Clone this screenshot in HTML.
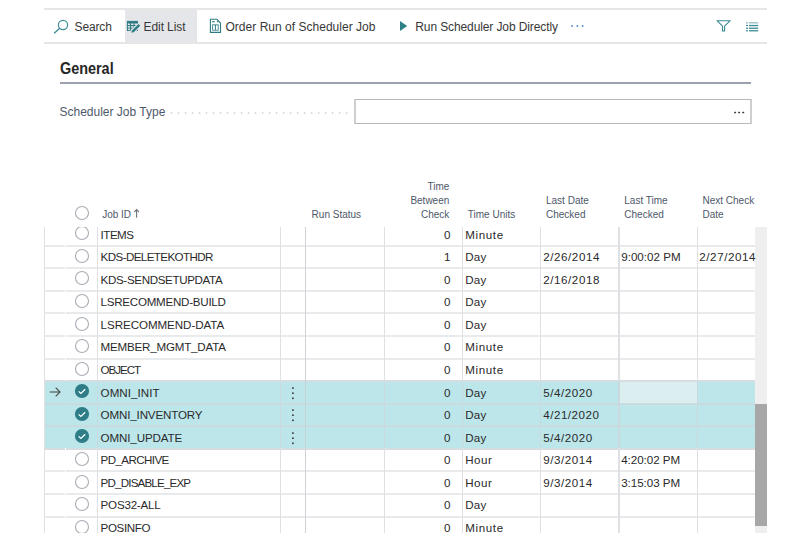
<!DOCTYPE html>
<html><head><meta charset="utf-8">
<style>
*{margin:0;padding:0;box-sizing:border-box}
html,body{width:800px;height:533px;overflow:hidden;background:#fff;font-family:"Liberation Sans",sans-serif;color:#333}
.a{position:absolute;white-space:nowrap}
.tb{font-size:12px;color:#383838;line-height:14px}
.hl{position:absolute;left:44px;width:723px;height:1px;background:#e6e6e6}
.hd{font-size:10px;color:#4e586a;line-height:13.8px}
.cell{font-size:11.6px;color:#2a2a2a;line-height:14px}
.vl{position:absolute;width:1.5px;background:#dfe0e4}
.rl{position:absolute;height:2px;background:#e9eaec}
</style></head><body>
<!-- toolbar -->
<div class="hl" style="top:8.4px;height:1.6px"></div>
<div class="hl" style="top:42.4px;height:1.6px"></div>
<div class="a" style="left:125px;top:10px;width:72px;height:32.4px;background:#e5e6e9"></div>

<svg class="a" style="left:50px;top:18px" width="20" height="18" viewBox="0 0 20 18">
  <circle cx="13" cy="7" r="4.6" fill="none" stroke="#3b8a94" stroke-width="1.2"/>
  <line x1="4.2" y1="15.2" x2="9.7" y2="10.3" stroke="#3b8a94" stroke-width="1.3"/>
</svg>
<div class="a tb" style="left:74.5px;top:20px;letter-spacing:-0.12px">Search</div>

<svg class="a" style="left:124px;top:18px" width="20" height="18" viewBox="0 0 20 18">
  <rect x="2.9" y="2.9" width="11.1" height="10.1" fill="#2f7c85"/>
  <g fill="#e5e6e9">
  <rect x="3.9" y="5.5" width="2.1" height="1.5"/><rect x="7.1" y="5.5" width="2.4" height="1.5"/><rect x="10.6" y="5.5" width="2.4" height="1.5"/>
  <rect x="3.9" y="8.1" width="2.1" height="1.5"/><rect x="7.1" y="8.1" width="2.4" height="1.5"/><rect x="10.6" y="8.1" width="2.4" height="1.5"/>
  <rect x="3.9" y="10.6" width="2.1" height="1.5"/><rect x="7.1" y="10.6" width="2.4" height="1.5"/><rect x="10.6" y="10.6" width="2.4" height="1.5"/>
  </g>
  <path d="M8 14.2 L15.4 6.8" stroke="#e5e6e9" stroke-width="4.6"/>
  <path d="M8.6 13.6 L15.4 6.8" stroke="#2f7c85" stroke-width="2.5"/>
  <path d="M7.2 14.8 L7.9 12.6 L9.5 14.1 Z" fill="#2f7c85"/>
</svg>
<div class="a tb" style="left:143.6px;top:20px;letter-spacing:-0.1px">Edit List</div>

<svg class="a" style="left:209px;top:18px" width="14" height="16" viewBox="0 0 14 16">
  <path d="M1.4 1.3 H7.9 L11.5 5 V14.4 H1.4 Z" fill="none" stroke="#2f7c85" stroke-width="1.1"/>
  <rect x="3.2" y="6.4" width="6.4" height="6.2" fill="#2f7c85"/>
  <rect x="4.0" y="7.3" width="1.9" height="4.5" fill="#fff"/><rect x="6.9" y="7.3" width="1.9" height="4.5" fill="#fff"/>
  <rect x="3.1" y="3.1" width="2.6" height="1.2" fill="#2f7c85"/>
  <rect x="7.9" y="3.1" width="1.2" height="1.2" fill="#2f7c85"/>
</svg>
<div class="a tb" style="left:225.5px;top:20px;letter-spacing:0.02px">Order Run of Scheduler Job</div>

<svg class="a" style="left:399px;top:20px" width="10" height="12" viewBox="0 0 10 12">
  <path d="M1 1 L8.2 6 L1 11 Z" fill="#2f7f89"/>
</svg>
<div class="a tb" style="left:415.3px;top:20px;letter-spacing:-0.11px">Run Scheduler Job Directly</div>
<svg class="a" style="left:570px;top:24px" width="16" height="4" viewBox="0 0 16 4">
  <g fill="#3f7fc6"><rect x="1.3" y="1.2" width="1.6" height="1.6"/><rect x="6.6" y="1.2" width="1.6" height="1.6"/><rect x="11.8" y="1.2" width="1.6" height="1.6"/></g>
</svg>

<svg class="a" style="left:715px;top:19px" width="17" height="14" viewBox="0 0 17 14">
  <path d="M2 1.7 H15.2 L9.6 7.2 V12.05 H7.5 V7.2 Z" fill="none" stroke="#3b8a94" stroke-width="1.1" stroke-linejoin="round"/>
</svg>
<svg class="a" style="left:745px;top:21px" width="15" height="11" viewBox="0 0 15 11">
  <g fill="#3b8a94">
  <rect x="1" y="1.1" width="2" height="1.4" fill="#9cc4c8"/><rect x="4" y="1.1" width="9.2" height="1.4" fill="#9cc4c8"/>
  <rect x="1" y="3.9" width="2" height="1.2"/><rect x="4" y="3.9" width="9.2" height="1.3"/>
  <rect x="1" y="6.7" width="2" height="1.2"/><rect x="4" y="6.6" width="9.2" height="1.3"/>
  <rect x="1" y="9.2" width="2" height="1.2"/><rect x="4" y="9.1" width="9.2" height="1.3"/>
  </g>
</svg>

<!-- General -->
<div class="a" style="left:60px;top:60.1px;font-size:16px;font-weight:bold;color:#262626;line-height:18px;transform:scaleX(0.9);transform-origin:0 0">General</div>
<div class="a" style="left:60px;top:82px;width:691px;height:2px;background:#9ca2ad"></div>

<div class="a" style="left:59.5px;top:105.1px;font-size:12px;color:#4f596b;line-height:14px;letter-spacing:0px">Scheduler Job Type</div>
<svg class="a" style="left:170px;top:112.2px" width="182" height="2" viewBox="0 0 182 2"><g fill="#cdd0d6"><rect x="0.8" y="0.3" width="1.5" height="1.5"/><rect x="7.8" y="0.3" width="1.5" height="1.5"/><rect x="14.8" y="0.3" width="1.5" height="1.5"/><rect x="21.8" y="0.3" width="1.5" height="1.5"/><rect x="28.8" y="0.3" width="1.5" height="1.5"/><rect x="35.8" y="0.3" width="1.5" height="1.5"/><rect x="42.8" y="0.3" width="1.5" height="1.5"/><rect x="49.8" y="0.3" width="1.5" height="1.5"/><rect x="56.8" y="0.3" width="1.5" height="1.5"/><rect x="63.8" y="0.3" width="1.5" height="1.5"/><rect x="70.8" y="0.3" width="1.5" height="1.5"/><rect x="77.8" y="0.3" width="1.5" height="1.5"/><rect x="84.8" y="0.3" width="1.5" height="1.5"/><rect x="91.9" y="0.3" width="1.5" height="1.5"/><rect x="98.9" y="0.3" width="1.5" height="1.5"/><rect x="105.9" y="0.3" width="1.5" height="1.5"/><rect x="112.9" y="0.3" width="1.5" height="1.5"/><rect x="119.9" y="0.3" width="1.5" height="1.5"/><rect x="126.9" y="0.3" width="1.5" height="1.5"/><rect x="133.9" y="0.3" width="1.5" height="1.5"/><rect x="140.9" y="0.3" width="1.5" height="1.5"/><rect x="147.9" y="0.3" width="1.5" height="1.5"/><rect x="154.9" y="0.3" width="1.5" height="1.5"/><rect x="161.9" y="0.3" width="1.5" height="1.5"/><rect x="168.9" y="0.3" width="1.5" height="1.5"/><rect x="175.9" y="0.3" width="1.5" height="1.5"/></g></svg>
<div class="a" style="left:354px;top:98.8px;width:397.5px;height:25.3px;border-style:solid;border-color:#b8b8b8 #cfcfcf;border-width:1.4px 2px"></div>
<svg class="a" style="left:730px;top:110px" width="16" height="5" viewBox="0 0 16 5"><g fill="#3c3c3c"><rect x="4.1" y="1.65" width="2" height="1.5" rx="0.5"/><rect x="8.1" y="1.65" width="2" height="1.5" rx="0.5"/><rect x="12.2" y="1.65" width="2" height="1.5" rx="0.5"/></g></svg>

<!-- GRID START -->
<svg class="a" style="left:73.7px;top:204.5px" width="16" height="16" viewBox="0 0 16 16"><circle cx="8" cy="8" r="6.5" fill="none" stroke="#a9adb4" stroke-width="1.1"/></svg>
<div class="a hd" style="left:102.2px;top:208.0px">Job ID</div>
<svg class="a" style="left:132px;top:207px" width="10" height="12" viewBox="0 0 10 12"><path d="M4.6 2.6 V10.8" stroke="#6f737a" stroke-width="1.1"/><path d="M2.2 5.2 L4.6 2.6 L7 5.2" fill="none" stroke="#6f737a" stroke-width="1.1"/></svg>
<div class="a hd" style="left:311.6px;top:208.1px">Run Status</div>
<div class="a hd" style="left:384px;width:65.3px;text-align:right;top:180.1px">Time<br>Between<br>Check</div>
<div class="a hd" style="left:467.8px;top:208.1px">Time Units</div>
<div class="a hd" style="left:546px;top:193.9px">Last Date<br>Checked</div>
<div class="a hd" style="left:624.3px;top:193.9px">Last Time<br>Checked</div>
<div class="a hd" style="left:702.5px;top:193.9px">Next Check<br>Date</div>
<div class="a" style="left:0;top:227.0px;width:767px;height:306.0px;overflow:hidden">
<div class="a" style="left:44.5px;top:153.62px;width:710.5px;height:22.57px;background:#bde6ea"></div>
<div class="a" style="left:44.5px;top:176.19px;width:710.5px;height:22.57px;background:#bde6ea"></div>
<div class="a" style="left:44.5px;top:198.76px;width:710.5px;height:22.57px;background:#bde6ea"></div>
<div class="a" style="left:619.3px;top:154.62px;width:78px;height:21.5px;background:#dbeef0"></div>
<div class="rl" style="left:44.5px;top:17.70px;width:20.5px"></div>
<div class="rl" style="left:66px;top:17.70px;width:689px"></div>
<div class="rl" style="left:44.5px;top:40.27px;width:20.5px"></div>
<div class="rl" style="left:66px;top:40.27px;width:689px"></div>
<div class="rl" style="left:44.5px;top:62.84px;width:20.5px"></div>
<div class="rl" style="left:66px;top:62.84px;width:689px"></div>
<div class="rl" style="left:44.5px;top:85.41px;width:20.5px"></div>
<div class="rl" style="left:66px;top:85.41px;width:689px"></div>
<div class="rl" style="left:44.5px;top:107.98px;width:20.5px"></div>
<div class="rl" style="left:66px;top:107.98px;width:689px"></div>
<div class="rl" style="left:44.5px;top:130.55px;width:20.5px"></div>
<div class="rl" style="left:66px;top:130.55px;width:689px"></div>
<div class="rl" style="left:44.5px;top:153.12px;width:20.5px;background:#d6dde0"></div>
<div class="rl" style="left:66px;top:153.12px;width:689px;background:#d6dde0"></div>
<div class="rl" style="left:44.5px;top:175.69px;width:20.5px;background:#cadbdf"></div>
<div class="rl" style="left:66px;top:175.69px;width:689px;background:#cadbdf"></div>
<div class="rl" style="left:44.5px;top:198.26px;width:20.5px;background:#cadbdf"></div>
<div class="rl" style="left:66px;top:198.26px;width:689px;background:#cadbdf"></div>
<div class="rl" style="left:44.5px;top:220.83px;width:20.5px;background:#d6dde0"></div>
<div class="rl" style="left:66px;top:220.83px;width:689px;background:#d6dde0"></div>
<div class="rl" style="left:44.5px;top:243.40px;width:20.5px"></div>
<div class="rl" style="left:66px;top:243.40px;width:689px"></div>
<div class="rl" style="left:44.5px;top:265.97px;width:20.5px"></div>
<div class="rl" style="left:66px;top:265.97px;width:689px"></div>
<div class="rl" style="left:44.5px;top:288.54px;width:20.5px"></div>
<div class="rl" style="left:66px;top:288.54px;width:689px"></div>
<div class="rl" style="left:44.5px;top:311.11px;width:20.5px"></div>
<div class="rl" style="left:66px;top:311.11px;width:689px"></div>
<div class="vl" style="left:43.8px;top:0;height:320px"></div>
<div class="vl" style="left:96.7px;top:0;height:320px"></div>
<div class="vl" style="left:96.7px;top:153.62px;height:67.71px;background:#c9d9dd"></div>
<div class="vl" style="left:279.8px;top:0;height:320px"></div>
<div class="vl" style="left:279.8px;top:153.62px;height:67.71px;background:#c9d9dd"></div>
<div class="a" style="left:304.8px;top:0;width:1.6px;height:320px;background:#d0d2d7"></div>
<div class="a" style="left:304.8px;top:153.62px;width:1.6px;height:67.71px;background:#c4d2d6"></div>
<div class="vl" style="left:383.9px;top:0;height:320px"></div>
<div class="vl" style="left:383.9px;top:153.62px;height:67.71px;background:#c9d9dd"></div>
<div class="vl" style="left:461.8px;top:0;height:320px"></div>
<div class="vl" style="left:461.8px;top:153.62px;height:67.71px;background:#c9d9dd"></div>
<div class="vl" style="left:539.8px;top:0;height:320px"></div>
<div class="vl" style="left:539.8px;top:153.62px;height:67.71px;background:#c9d9dd"></div>
<div class="vl" style="left:618.0px;top:0;height:320px"></div>
<div class="vl" style="left:618.0px;top:153.62px;height:67.71px;background:#c9d9dd"></div>
<div class="vl" style="left:696.5px;top:0;height:320px"></div>
<div class="vl" style="left:696.5px;top:153.62px;height:67.71px;background:#c9d9dd"></div>
<div class="a" style="left:755px;top:0;width:12px;height:320px;background:#efefef"></div>
<div class="a" style="left:755.2px;top:176.9px;width:11.8px;height:122.1px;background:#a7a7a7"></div>
<svg class="a" style="left:73.7px;top:-1.72px" width="16" height="16" viewBox="0 0 16 16"><circle cx="8" cy="8" r="6.5" fill="none" stroke="#a9adb4" stroke-width="1.1"/></svg>
<div class="a cell" style="left:100.6px;top:0.63px;letter-spacing:-0.510px">ITEMS</div>
<div class="a cell" style="left:384.7px;width:65.8px;text-align:right;top:0.63px">0</div>
<div class="a cell" style="left:465.2px;top:0.63px;letter-spacing:0.638px">Minute</div>
<svg class="a" style="left:73.7px;top:20.85px" width="16" height="16" viewBox="0 0 16 16"><circle cx="8" cy="8" r="6.5" fill="none" stroke="#a9adb4" stroke-width="1.1"/></svg>
<div class="a cell" style="left:100.6px;top:23.20px;letter-spacing:-0.598px">KDS-DELETEKOTHDR</div>
<div class="a cell" style="left:384.7px;width:65.8px;text-align:right;top:23.20px">1</div>
<div class="a cell" style="left:465.2px;top:23.20px;letter-spacing:0.190px">Day</div>
<div class="a cell" style="left:543.2px;top:23.20px;letter-spacing:0.578px">2/26/2014</div>
<div class="a cell" style="left:621.2px;top:23.20px;letter-spacing:0.022px">9:00:02 PM</div>
<div class="a cell" style="left:699.3px;top:23.20px;letter-spacing:0.578px">2/27/2014</div>
<svg class="a" style="left:73.7px;top:43.42px" width="16" height="16" viewBox="0 0 16 16"><circle cx="8" cy="8" r="6.5" fill="none" stroke="#a9adb4" stroke-width="1.1"/></svg>
<div class="a cell" style="left:100.6px;top:45.77px;letter-spacing:-0.354px">KDS-SENDSETUPDATA</div>
<div class="a cell" style="left:384.7px;width:65.8px;text-align:right;top:45.77px">0</div>
<div class="a cell" style="left:465.2px;top:45.77px;letter-spacing:0.190px">Day</div>
<div class="a cell" style="left:543.2px;top:45.77px;letter-spacing:0.578px">2/16/2018</div>
<svg class="a" style="left:73.7px;top:65.99px" width="16" height="16" viewBox="0 0 16 16"><circle cx="8" cy="8" r="6.5" fill="none" stroke="#a9adb4" stroke-width="1.1"/></svg>
<div class="a cell" style="left:100.6px;top:68.34px;letter-spacing:-0.261px">LSRECOMMEND-BUILD</div>
<div class="a cell" style="left:384.7px;width:65.8px;text-align:right;top:68.34px">0</div>
<div class="a cell" style="left:465.2px;top:68.34px;letter-spacing:0.190px">Day</div>
<svg class="a" style="left:73.7px;top:88.56px" width="16" height="16" viewBox="0 0 16 16"><circle cx="8" cy="8" r="6.5" fill="none" stroke="#a9adb4" stroke-width="1.1"/></svg>
<div class="a cell" style="left:100.6px;top:90.91px;letter-spacing:-0.062px">LSRECOMMEND-DATA</div>
<div class="a cell" style="left:384.7px;width:65.8px;text-align:right;top:90.91px">0</div>
<div class="a cell" style="left:465.2px;top:90.91px;letter-spacing:0.190px">Day</div>
<svg class="a" style="left:73.7px;top:111.13px" width="16" height="16" viewBox="0 0 16 16"><circle cx="8" cy="8" r="6.5" fill="none" stroke="#a9adb4" stroke-width="1.1"/></svg>
<div class="a cell" style="left:100.6px;top:113.48px;letter-spacing:-0.207px">MEMBER_MGMT_DATA</div>
<div class="a cell" style="left:384.7px;width:65.8px;text-align:right;top:113.48px">0</div>
<div class="a cell" style="left:465.2px;top:113.48px;letter-spacing:0.638px">Minute</div>
<svg class="a" style="left:73.7px;top:133.70px" width="16" height="16" viewBox="0 0 16 16"><circle cx="8" cy="8" r="6.5" fill="none" stroke="#a9adb4" stroke-width="1.1"/></svg>
<div class="a cell" style="left:100.6px;top:136.05px;letter-spacing:-1.030px">OBJECT</div>
<div class="a cell" style="left:384.7px;width:65.8px;text-align:right;top:136.05px">0</div>
<div class="a cell" style="left:465.2px;top:136.05px;letter-spacing:0.638px">Minute</div>
<svg class="a" style="left:73.7px;top:156.27px" width="16" height="16" viewBox="0 0 16 16"><circle cx="8" cy="8" r="7.1" fill="#2e7d87"/><path d="M4.6 8.4 L6.9 10.5 L11.2 6.2" fill="none" stroke="#fff" stroke-width="1.25"/></svg>
<svg class="a" style="left:48px;top:158.77px" width="14" height="12" viewBox="0 0 14 12"><path d="M1.7 6 H12" stroke="#4a4a4a" stroke-width="1.1"/><path d="M7.7 1.7 L12 6 L7.7 10.3" fill="none" stroke="#4a4a4a" stroke-width="1.1"/></svg>
<svg class="a" style="left:291px;top:159.27px" width="4" height="14" viewBox="0 0 4 14"><g fill="#333"><rect x="1.1" y="1.3" width="1.6" height="1.6"/><rect x="1.1" y="6.4" width="1.6" height="1.6"/><rect x="1.1" y="11.5" width="1.6" height="1.6"/></g></svg>
<div class="a cell" style="left:100.6px;top:158.62px;letter-spacing:0.035px">OMNI_INIT</div>
<div class="a cell" style="left:384.7px;width:65.8px;text-align:right;top:158.62px">0</div>
<div class="a cell" style="left:465.2px;top:158.62px;letter-spacing:0.190px">Day</div>
<div class="a cell" style="left:543.2px;top:158.62px;letter-spacing:0.551px">5/4/2020</div>
<svg class="a" style="left:73.7px;top:178.84px" width="16" height="16" viewBox="0 0 16 16"><circle cx="8" cy="8" r="7.1" fill="#2e7d87"/><path d="M4.6 8.4 L6.9 10.5 L11.2 6.2" fill="none" stroke="#fff" stroke-width="1.25"/></svg>
<svg class="a" style="left:291px;top:180.94px" width="4" height="14" viewBox="0 0 4 14"><g fill="#333"><rect x="1.1" y="1.3" width="1.6" height="1.6"/><rect x="1.1" y="6.4" width="1.6" height="1.6"/><rect x="1.1" y="11.5" width="1.6" height="1.6"/></g></svg>
<div class="a cell" style="left:100.6px;top:181.19px;letter-spacing:-0.149px">OMNI_INVENTORY</div>
<div class="a cell" style="left:384.7px;width:65.8px;text-align:right;top:181.19px">0</div>
<div class="a cell" style="left:465.2px;top:181.19px;letter-spacing:0.190px">Day</div>
<div class="a cell" style="left:543.2px;top:181.19px;letter-spacing:0.527px">4/21/2020</div>
<svg class="a" style="left:73.7px;top:201.41px" width="16" height="16" viewBox="0 0 16 16"><circle cx="8" cy="8" r="7.1" fill="#2e7d87"/><path d="M4.6 8.4 L6.9 10.5 L11.2 6.2" fill="none" stroke="#fff" stroke-width="1.25"/></svg>
<svg class="a" style="left:291px;top:203.51px" width="4" height="14" viewBox="0 0 4 14"><g fill="#333"><rect x="1.1" y="1.3" width="1.6" height="1.6"/><rect x="1.1" y="6.4" width="1.6" height="1.6"/><rect x="1.1" y="11.5" width="1.6" height="1.6"/></g></svg>
<div class="a cell" style="left:100.6px;top:203.76px;letter-spacing:-0.129px">OMNI_UPDATE</div>
<div class="a cell" style="left:384.7px;width:65.8px;text-align:right;top:203.76px">0</div>
<div class="a cell" style="left:465.2px;top:203.76px;letter-spacing:0.190px">Day</div>
<div class="a cell" style="left:543.2px;top:203.76px;letter-spacing:0.551px">5/4/2020</div>
<svg class="a" style="left:73.7px;top:223.98px" width="16" height="16" viewBox="0 0 16 16"><circle cx="8" cy="8" r="6.5" fill="none" stroke="#a9adb4" stroke-width="1.1"/></svg>
<div class="a cell" style="left:100.6px;top:226.33px;letter-spacing:-0.599px">PD_ARCHIVE</div>
<div class="a cell" style="left:384.7px;width:65.8px;text-align:right;top:226.33px">0</div>
<div class="a cell" style="left:465.2px;top:226.33px;letter-spacing:0.520px">Hour</div>
<div class="a cell" style="left:543.2px;top:226.33px;letter-spacing:0.551px">9/3/2014</div>
<div class="a cell" style="left:621.2px;top:226.33px;letter-spacing:-0.033px">4:20:02 PM</div>
<svg class="a" style="left:73.7px;top:246.55px" width="16" height="16" viewBox="0 0 16 16"><circle cx="8" cy="8" r="6.5" fill="none" stroke="#a9adb4" stroke-width="1.1"/></svg>
<div class="a cell" style="left:100.6px;top:248.90px;letter-spacing:-0.822px">PD_DISABLE_EXP</div>
<div class="a cell" style="left:384.7px;width:65.8px;text-align:right;top:248.90px">0</div>
<div class="a cell" style="left:465.2px;top:248.90px;letter-spacing:0.520px">Hour</div>
<div class="a cell" style="left:543.2px;top:248.90px;letter-spacing:0.551px">9/3/2014</div>
<div class="a cell" style="left:621.2px;top:248.90px;letter-spacing:-0.033px">3:15:03 PM</div>
<svg class="a" style="left:73.7px;top:269.12px" width="16" height="16" viewBox="0 0 16 16"><circle cx="8" cy="8" r="6.5" fill="none" stroke="#a9adb4" stroke-width="1.1"/></svg>
<div class="a cell" style="left:100.6px;top:271.47px;letter-spacing:-0.223px">POS32-ALL</div>
<div class="a cell" style="left:384.7px;width:65.8px;text-align:right;top:271.47px">0</div>
<div class="a cell" style="left:465.2px;top:271.47px;letter-spacing:0.190px">Day</div>
<svg class="a" style="left:73.7px;top:291.69px" width="16" height="16" viewBox="0 0 16 16"><circle cx="8" cy="8" r="6.5" fill="none" stroke="#a9adb4" stroke-width="1.1"/></svg>
<div class="a cell" style="left:100.6px;top:294.04px;letter-spacing:-0.365px">POSINFO</div>
<div class="a cell" style="left:384.7px;width:65.8px;text-align:right;top:294.04px">0</div>
<div class="a cell" style="left:465.2px;top:294.04px;letter-spacing:0.638px">Minute</div>
</div>
<!-- GRID END -->
</body></html>
